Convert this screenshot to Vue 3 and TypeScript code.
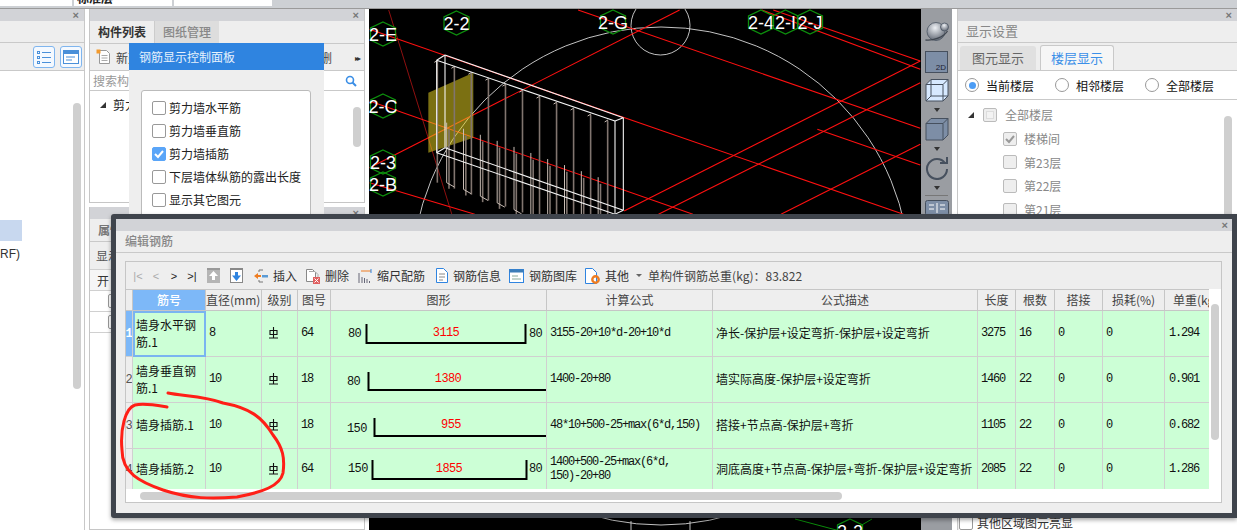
<script setup lang="ts">
const hex = [
  { t: '2-E', x: 383, y: 33 }, { t: '2-2', x: 456.5, y: 22 }, { t: '2-G', x: 613, y: 21 },
  { t: '2-4', x: 761, y: 21 }, { t: '2-I', x: 785.5, y: 21 }, { t: '2-J', x: 810, y: 21 },
  { t: '2-C', x: 383, y: 105 }, { t: '2-3', x: 383, y: 161 }, { t: '2-B', x: 383, y: 183 },
  { t: '2-2', x: 850, y: 530 }
]
const hexPts = (x: number, y: number) =>
  [[0, -12], [12.5, -6], [12.5, 6], [0, 12], [-12.5, 6], [-12.5, -6]]
    .map(p => `${x + p[0]},${y + p[1]}`).join(' ')
const SX = 2.613
const z = (a: number, b: number, c: number, d: number) => ({ x1: 360 + a / SX, y1: b / 3, x2: 360 + c / SX, y2: d / 3 })
const q = (a: number, b: number, c: number, d: number) => ({ x1: 420 + a / 3, y1: 50 + b / 3, x2: 420 + c / 3, y2: 50 + d / 3 })
const redLines = [
  z(25, 85, 1420, 640), z(25, 300, 870, 640), z(25, 545, 300, 640), z(570, 27, 1464, 382),
  z(1080, 27, 1464, 180), z(1050, 27, 1464, 205), z(1195, 385, 1464, 492), z(25, 500, 835, 27),
  z(690, 630, 1464, 180), z(780, 640, 1464, 245), z(1100, 640, 1464, 430)
]
const darkLine = z(75, 27, 240, 640)
const wire = [
  q(75, 12, 610, 200), q(50, 28, 585, 210), q(75, 12, 50, 28), q(610, 200, 585, 210),
  q(75, 290, 610, 478), q(50, 305, 585, 490), q(75, 290, 50, 305), q(610, 478, 585, 490),
  q(50, 28, 50, 305), q(75, 12, 75, 290), q(585, 210, 585, 490), q(610, 200, 610, 478)
]
const yellow = [[25, 125], [160, 65], [160, 260], [25, 305]]
  .map(p => `${420 + p[0] / 3},${50 + p[1] / 3}`).join(' ')

const idx = Array.from({ length: 11 }, (_, i) => i)
const barA = idx.map(i => {
  const x = 52 + 51.1 * i
  const top = 30 + (x - 52) * 0.35
  return { x, top, bot: top + 365 }
})
const barB = idx.slice(0, 10).map(i => {
  const x = 80 + 50.5 * i
  return { x, top: 215 + (x - 80) * 0.36, bot: 395 + (x - 80) * 0.4 }
})
const darkBars = [
  ...barA.map(b => q(b.x, b.top, b.x, b.bot)),
  ...barB.map(b => q(b.x + 7, b.top + 20, b.x + 7, b.bot + 18))
]
const paleBars = [
  ...barB.map(b => q(b.x, b.top, b.x, b.bot)),
  ...barB.map(b => q(b.x, b.bot, b.x + 23, b.bot + 13)),
  ...barA.map(b => q(b.x - 9, b.top + 4, b.x + 1, b.top - 2))
]

const floors = [
  { t: '楼梯间', on: true }, { t: '第23层', on: false }, { t: '第22层', on: false }, { t: '第21层', on: false }
]
const popupItems = [
  { t: '剪力墙水平筋', on: false }, { t: '剪力墙垂直筋', on: false }, { t: '剪力墙插筋', on: true },
  { t: '下层墙体纵筋的露出长度', on: false }, { t: '显示其它图元', on: false }
]
const heads = ['筋号', '直径(mm)', '级别', '图号', '图形', '计算公式', '公式描述', '长度', '根数', '搭接', '损耗(%)', '单重(kg)']

interface Row {
  name: string; dia: string; fig: string; formula: string; desc: string; len: string; count: string; w: string
  path: string; mid: string; mx: number; my: number; lv: string; lx: number; ly: number; rv: string
}
const rows: Row[] = [
  { name: '墙身水平钢筋.1', dia: '8', fig: '64', formula: '3155-20+10*d-20+10*d', desc: '净长-保护层+设定弯折-保护层+设定弯折', len: '3275', count: '16', w: '1.294',
    path: 'M35.500 13V32H194.500V13', mid: '3115', mx: 115, my: 25, lv: '80', lx: 17, ly: 26, rv: '80' },
  { name: '墙身垂直钢筋.1', dia: '10', fig: '18', formula: '1400-20+80', desc: '墙实际高度-保护层+设定弯折', len: '1460', count: '22', w: '0.901',
    path: 'M37.500 15V33H216', mid: '1380', mx: 117, my: 25, lv: '80', lx: 16, ly: 28, rv: '' },
  { name: '墙身插筋.1', dia: '10', fig: '18', formula: '48*10+500-25+max(6*d,150)', desc: '搭接+节点高-保护层+弯折', len: '1105', count: '22', w: '0.682',
    path: 'M43.500 15V33H216', mid: '955', mx: 120, my: 25, lv: '150', lx: 16, ly: 29, rv: '' },
  { name: '墙身插筋.2', dia: '10', fig: '64', formula: '1400+500-25+max(6*d,\n150)-20+80', desc: '洞底高度+节点高-保护层+弯折-保护层+设定弯折', len: '2085', count: '22', w: '1.286',
    path: 'M41.500 13V32H195.500V13', mid: '1855', mx: 118, my: 25, lv: '150', lx: 17, ly: 25, rv: '80' }
]
</script>

<template>
  <div class="desk">
    <div class="strip">
      <span class="seg s1"></span>
      <span class="seg s2"><em>标准层</em></span>
      <span class="seg s3"></span>
    </div>

    <div class="main">
      <!-- left panel -->
      <section class="left">
        <div class="pbar"><span class="x">×</span></div>
        <div class="blank"></div>
        <div class="ltools">
          <span class="lbtn">
            <svg width="18" height="18" viewBox="0 0 18 18"><g fill="none" stroke="#4a90d9"><rect x="2.500" y="3.500" width="2" height="2" /><rect x="2.500" y="8.500" width="2" height="2" /><rect x="2.500" y="13.500" width="2" height="2" /><path d="M7 4.500h9M7 9.500h9M7 14.500h9" /></g></svg>
          </span>
          <span class="lbtn">
            <svg width="18" height="18" viewBox="0 0 18 18"><rect x="1.500" y="2.500" width="15" height="13" fill="#fff" stroke="#4a90d9" /><rect x="1.500" y="2.500" width="15" height="3.500" fill="#4a90d9" /><path d="M4 9h9M4 12h6" stroke="#4a90d9" /></svg>
          </span>
        </div>
        <div class="lbody">
          <i class="lscroll"></i>
          <div class="lsel"></div>
          <div class="ltext">RF)</div>
        </div>
      </section>

      <!-- middle column -->
      <div class="mid">
        <section class="panel pa">
          <div class="pbar"><span class="x">×</span></div>
          <div class="tabs">
            <span class="tab on">构件列表</span>
            <span class="tab">图纸管理</span>
          </div>
          <div class="mtools">
            <svg class="doc" width="16" height="16" viewBox="0 0 16 16"><path d="M3.500 1.500h7l3 3v10h-10z" fill="#fff" stroke="#999" /><path d="M5.500 6.500h6M5.500 9h6M5.500 11.500h6" stroke="#aaa" /><rect x="0.500" y="0.500" width="4" height="4" fill="#f39a2d" /></svg>
            <span>新建</span>
            <span class="grow"></span>
            <span class="cutr">删</span>
            <span class="more">▸▸</span>
          </div>
          <div class="search">
            <span>搜索构件...</span>
            <svg width="12" height="12" viewBox="0 0 12 12"><circle cx="5" cy="5" r="3.500" fill="none" stroke="#3a8ee6" stroke-width="1.600" /><path d="M7.500 7.500L11 11" stroke="#3a8ee6" stroke-width="2" /></svg>
          </div>
          <div class="mtree">
            <i class="tri"></i><span>剪力墙</span>
            <i class="mscroll"></i>
          </div>
        </section>
        <section class="panel pb">
          <div class="pbar"><span class="x">×</span></div>
          <div class="tabs"><span class="tab on lone">属性</span></div>
          <div class="pbrow show">显示</div>
          <div class="pbrow open">开</div>
          <div class="pbrow cbrow"><i class="cb small"></i></div>
          <div class="pbrow cbrow"><i class="cb small"></i></div>
        </section>
      </div>

      <!-- CAD view -->
      <div class="cad">
        <svg width="552" height="522" viewBox="369 8 552 522">
          <g fill="none" stroke="#d8d8d8" stroke-width="0.900">
            <circle cx="661" cy="275" r="249" />
            <circle cx="660.500" cy="24.500" r="29.500" />
            <path d="M631 520V530M690 520V530" />
          </g>
          <line v-bind="darkLine" stroke="#8e1010" stroke-width="1" />
          <path d="M795 518L840 530M872 518L860 525" stroke="#0a8a0a" fill="none" />
          <line v-for="(l, i) in redLines" :key="'r' + i" v-bind="l" stroke="#ff1010" stroke-width="1.100" />
          <polygon :points="yellow" fill="#e0cc20" opacity="0.550" />
          <line v-for="(l, i) in darkBars" :key="'a' + i" v-bind="l" stroke="#81756f" stroke-width="1.600" />
          <line v-for="(l, i) in paleBars" :key="'b' + i" v-bind="l" stroke="#c8bcb4" stroke-width="1" />
          <line v-for="(l, i) in wire" :key="'w' + i" v-bind="l" stroke="#f4f4f4" stroke-width="1.100" />
          <g v-for="(h, i) in hex" :key="'x' + i">
            <polygon :points="hexPts(h.x, h.y)" fill="none" stroke="#0d8f0d" stroke-width="1.300" />
            <text :x="h.x" :y="h.y + 7" class="hext" text-anchor="middle">{{ h.t }}</text>
          </g>
        </svg>
      </div>

      <!-- view toolbar -->
      <div class="vbar">
        <svg width="24" height="24" viewBox="0 0 24 24">
          <defs>
            <radialGradient id="ball" cx="0.450" cy="0.300" r="0.750">
              <stop offset="0" stop-color="#eef1f5" />
              <stop offset="1" stop-color="#59606c" />
            </radialGradient>
          </defs>
          <circle cx="11" cy="12.500" r="9" fill="url(#ball)" stroke="#4b5563" stroke-width="0.800" />
          <circle cx="19.500" cy="8" r="4" fill="url(#ball)" stroke="#4b5563" stroke-width="0.800" />
          <path d="M0.500 21C8 22 19 18 22.500 12" fill="none" stroke="#3f4650" stroke-width="1.300" />
        </svg>
        <div class="v2d">2D</div>
        <svg width="24" height="24" viewBox="0 0 24 24"><path d="M1 6.500L6 1.500H23V18L18 23H1z" fill="#d7e9ff" stroke="#46505e" /><path d="M1 6.500H18V23M18 6.500L23 1.500M6 1.500V18H23M6 18L1 23" fill="none" stroke="#46505e" /></svg>
        <i class="caret"></i>
        <svg width="24" height="24" viewBox="0 0 24 24"><path d="M1 6.500L6 1.500H23V18L18 23H1z" fill="#7d8ea6" stroke="#46505e" /><path d="M1 6.500H18V23M18 6.500L23 1.500" fill="none" stroke="#46505e" /></svg>
        <i class="caret"></i>
        <svg width="24" height="24" viewBox="0 0 24 24"><path d="M20 7A10 10 0 1 0 22 13" fill="none" stroke="#46505e" stroke-width="2" /><path d="M15 7H22V1" fill="none" stroke="#46505e" stroke-width="2" /></svg>
        <i class="caret"></i>
        <b class="vsep"></b>
        <svg width="24" height="16" viewBox="0 0 24 16"><rect x="0.500" y="0.500" width="23" height="15" rx="2" fill="#7d8ea6" stroke="#46505e" /><path d="M4 5h5M4 9h5M15 5h5M15 9h5M12 3v10" stroke="#fff" /></svg>
      </div>

      <!-- right panel -->
      <section class="right">
        <div class="pbar"><span class="x">×</span></div>
        <div class="rtitle">显示设置</div>
        <div class="rtabs">
          <span class="rtab">图元显示</span>
          <span class="rtab on">楼层显示</span>
        </div>
        <div class="radios">
          <label><i class="radio on"></i>当前楼层</label>
          <label><i class="radio"></i>相邻楼层</label>
          <label><i class="radio"></i>全部楼层</label>
        </div>
        <div class="rtree">
          <i class="rscroll"></i>
          <div class="rnode root"><i class="tri"></i><i class="cb dis"><u></u></i><span>全部楼层</span></div>
          <div v-for="f in floors" :key="f.t" class="rnode">
            <i class="cb dis">
              <svg v-if="f.on" width="12" height="12" viewBox="0 0 12 12"><path d="M2 6l3 3 5-6" fill="none" stroke="#999" stroke-width="2" /></svg>
            </i>
            <span>{{ f.t }}</span>
          </div>
        </div>
        <div class="rfoot"><i class="cb small"></i><span>其他区域图元亮显</span></div>
      </section>
    </div>

    <!-- floating control panel -->
    <aside class="popup">
      <header>钢筋显示控制面板</header>
      <div class="pbox">
        <label v-for="p in popupItems" :key="p.t">
          <i class="cb" :class="{ checked: p.on }">
            <svg v-if="p.on" width="12" height="12" viewBox="0 0 12 12"><path d="M2 6l3 3 5-6" fill="none" stroke="#fff" stroke-width="2" /></svg>
          </i>{{ p.t }}
        </label>
      </div>
    </aside>

    <!-- rebar editor dialog -->
    <div class="dialog">
      <div class="pbar dbar"><span class="x">×</span></div>
      <div class="dtitle">编辑钢筋</div>
      <div class="dgroup">
        <div class="dtools">
          <span class="nav dim">|&lt;</span>
          <span class="nav dim">&lt;</span>
          <span class="nav">&gt;</span>
          <span class="nav">&gt;|</span>
          <svg class="t1" width="13" height="15" viewBox="0 0 13 15"><rect width="13" height="15" fill="#b5b5b5" /><rect y="0" width="13" height="2" fill="#999" /><path d="M6.500 3L11 8H8v4H5V8H2z" fill="#fff" /></svg>
          <svg class="t2" width="13" height="15" viewBox="0 0 13 15"><rect x="0.500" y="0.500" width="12" height="14" fill="#fff" stroke="#888" /><rect y="0" width="13" height="2" fill="#888" /><path d="M6.500 13L2 7.500h3V4h3v3.500h3z" fill="#2f84e0" /></svg>
          <span class="ti"><svg width="14" height="14" viewBox="0 0 14 14"><path d="M5 1H9M5 1V3M5 11V13H9M5 11" fill="none" stroke="#777" /><path d="M0 7L4 4V6H7V8H4V10z" fill="#ee7d22" /><rect x="8" y="6" width="6" height="2.500" fill="#5b9bd5" /></svg>插入</span>
          <span class="ti"><svg width="14" height="16" viewBox="0 0 14 16"><path d="M.5 1.500h6l3 3v9h-9z" fill="#fff" stroke="#888" /><path d="M3 3.500h6l3 3v8" fill="none" stroke="#aaa" /><rect x="7" y="9" width="7" height="7" fill="#e06060" /><path d="M8.500 10.500l4 4m0-4l-4 4" stroke="#fff" /></svg>删除</span>
          <span class="ti wide"><svg width="14" height="14" viewBox="0 0 14 14"><path d="M1 4v10M4 8v6M6.500 9v5M9 10v4M11.500 12v2" stroke="#667" /><path d="M3 2H13" stroke="#ee7d22" /><path d="M13 0v4" stroke="#2f84e0" /></svg>缩尺配筋</span>
          <span class="ti tight"><svg width="12" height="15" viewBox="0 0 12 15"><path d="M.5.500h7l4 4v10H.5z" fill="#fff" stroke="#2f84e0" /><path d="M3 6h6M3 9h6M3 12h4" stroke="#888" /></svg>钢筋信息</span>
          <span class="ti tight"><svg width="15" height="14" viewBox="0 0 15 14"><rect x=".5" y=".5" width="14" height="13" fill="#fff" stroke="#2f84e0" /><rect x=".5" y=".5" width="14" height="3" fill="#3d7db8" /><path d="M3 7h6M3 10h9" stroke="#8a9" /></svg>钢筋图库</span>
          <span class="ti"><svg width="15" height="16" viewBox="0 0 15 16"><path d="M.5.500h7l4 4v11H.5z" fill="#fff" stroke="#2f84e0" /><circle cx="10.500" cy="11.500" r="3.200" fill="none" stroke="#ee7d22" stroke-width="2.400" /></svg>其他</span>
          <i class="tcaret"></i>
          <span class="total">单构件钢筋总重(kg)：83.822</span>
        </div>
        <div class="tablewrap">
          <div class="gridbox">
            <div class="ghead">
              <span class="gh corner"></span>
              <span v-for="(h, i) in heads" :key="h" class="gh" :class="{ act: i === 0 }">{{ h }}</span>
            </div>
            <div v-for="(r, i) in rows" :key="i" class="grow-row">
              <span class="gc rn" :class="{ act: i === 0 }">{{ i + 1 }}</span>
              <span class="gc cjk" :class="{ sel: i === 0 }">{{ r.name }}</span>
              <span class="gc mono">{{ r.dia }}</span>
              <span class="gc">
                <svg class="grade" width="11" height="13" viewBox="0 0 11 13"><path d="M2 4.500H9V8.500H2zM5.500 1V12M1 12H10" fill="none" stroke="#111" stroke-width="1.100" /></svg>
              </span>
              <span class="gc mono">{{ r.fig }}</span>
              <span class="gc shape">
                <svg width="216" height="46" viewBox="0 0 216 46">
                  <path :d="r.path" fill="none" stroke="#000" stroke-width="2" />
                  <text :x="r.lx" :y="r.ly" class="dim-t">{{ r.lv }}</text>
                  <text v-if="r.rv" x="198" :y="i === 0 ? 26 : 25" class="dim-t">{{ r.rv }}</text>
                  <text :x="r.mx" :y="r.my" class="mid-t" text-anchor="middle">{{ r.mid }}</text>
                </svg>
              </span>
              <span class="gc mono pre">{{ r.formula }}</span>
              <span class="gc cjk">{{ r.desc }}</span>
              <span class="gc mono">{{ r.len }}</span>
              <span class="gc mono">{{ r.count }}</span>
              <span class="gc mono">0</span>
              <span class="gc mono">0</span>
              <span class="gc mono">{{ r.w }}</span>
            </div>
          </div>
          <i class="dv"></i>
          <i class="dh"></i>
        </div>
      </div>
    </div>

    <!-- hand drawn annotation -->
    <svg class="note" width="1237" height="530" viewBox="0 0 1237 530">
      <path d="M168 393C182 396 205 396 223 403C250 408 262 417 273 435C283 448 285 458 283 473C280 486 263 492 237 497C212 499 190 499 163 490C140 482 122 473 122 450C120 430 125 408 135 405C145 403 155 405 167 407" fill="none" stroke="#ff1f17" stroke-width="3" stroke-linecap="round" />
    </svg>
  </div>
</template>

<style>
html, body { margin: 0; background: #fff; }
</style>

<style scoped>
.desk {
  position: relative;
  width: 1237px;
  height: 530px;
  overflow: hidden;
  display: flex;
  flex-direction: column;
  font-family: "Noto Sans CJK SC", "Liberation Sans", sans-serif;
  font-size: 12px;
  color: #222;
  background: #fff;
}
i, em, u { font-style: normal; text-decoration: none; }
.strip {
  flex: none;
  display: flex;
  gap: 2px;
  background: #cdd0d4;
  border-bottom: 1px solid #9a9a9a;
  box-sizing: border-box;
  height: 9px;
}
.seg { height: 6px; background: #fff; overflow: hidden; display: block; }
.s1 { width: 72px; }
.s2 { width: 98px; }
.s3 { width: 98px; }
.seg em { display: block; font-weight: 700; line-height: 12px; margin-top: -8px; margin-left: 3px; }
.main { flex: 1; display: flex; min-height: 0; }

.pbar {
  height: 12px;
  background: #d2d3d7;
  display: flex;
  justify-content: flex-end;
  align-items: center;
  padding-right: 5px;
  flex: none;
}
.x { font: 700 11px/12px "Liberation Sans", sans-serif; color: #777; }

.left { width: 85px; flex: none; display: flex; flex-direction: column; background: #eee; border-right: 1px solid #c8c8c8; box-sizing: border-box; }
.blank { height: 21px; border-bottom: 1px solid #c9c9c9; flex: none; }
.ltools { height: 28px; flex: none; display: flex; align-items: center; justify-content: flex-end; gap: 5px; padding-right: 2px; border-bottom: 1px solid #c9c9c9; box-sizing: border-box; }
.lbtn { width: 22px; height: 22px; border: 1px solid #7fb5ee; border-radius: 3px; box-sizing: border-box; background: #f4f9ff; display: flex; align-items: center; justify-content: center; }
.lbody { flex: 1; background: #fff; position: relative; padding-top: 149px; }
.lscroll { position: absolute; left: 73px; top: 32px; width: 8px; height: 286px; background: #cfcfcf; border-radius: 4px; }
.lsel { width: 22px; height: 21px; background: #c8d8ef; }
.ltext { margin-top: 4px; color: #333; line-height: 18px; font-family: "Liberation Sans", sans-serif; }

.mid { width: 276px; margin: 0 4px; flex: none; display: flex; flex-direction: column; gap: 4px; }
.panel { background: #fff; border: 1px solid #c6c6c6; border-top: 0; display: flex; flex-direction: column; box-sizing: border-box; }
.pa { height: 194px; }
.pb { flex: 1; }
.tabs { height: 23px; flex: none; display: flex; background: #eee; border-bottom: 1px solid #c9c9c9; box-sizing: border-box; }
.tab { width: 64px; text-align: center; line-height: 22px; background: #ddd; color: #888; font-weight: 500; border-left: 1px solid #ccc; }
.tab.on { background: #eee; color: #333; font-weight: 700; border-left: 0; }
.tab.lone { text-align: left; padding-left: 8px; color: #777; }
.mtools { height: 27px; flex: none; display: flex; align-items: center; background: #eee; padding: 0 5px; gap: 4px; border-bottom: 1px solid #c9c9c9; color: #444; box-sizing: border-box; }
.doc { margin-left: 1px; }
.grow { flex: 1; }
.cutr { margin-right: 19px; }
.more { font-size: 8px; letter-spacing: -2px; color: #333; }
.search { height: 20px; flex: none; display: flex; align-items: center; justify-content: space-between; padding: 0 7px 0 3px; color: #999; border-bottom: 1px solid #c9c9c9; box-sizing: border-box; }
.mtree { flex: 1; position: relative; padding: 5px 0 0 10px; display: flex; align-items: flex-start; gap: 7px; }
.tri { width: 0; height: 0; border-style: solid; border-width: 0 0 6px 6px; border-color: transparent transparent #333 transparent; margin-top: 6px; flex: none; }
.mscroll { position: absolute; right: 3px; top: 16px; width: 8px; height: 40px; background: #cfcfcf; border-radius: 4px; }
.pbrow { display: flex; align-items: center; color: #555; box-sizing: border-box; border-bottom: 1px solid #d0d0d0; flex: none; }
.show { height: 28px; padding-left: 6px; background: #eee; }
.open { height: 21px; padding-left: 7px; background: #f6f6f6; color: #333; }
.cbrow { height: 21px; padding-left: 18px; background: #fff; }

.cad { width: 552px; flex: none; background: #000; overflow: hidden; line-height: 0; }
.hext { fill: #fff; font: 18px "Liberation Sans", sans-serif; }

.vbar { width: 31px; flex: none; background: #9a9da2; display: flex; flex-direction: column; align-items: center; padding-top: 10px; box-sizing: border-box; gap: 0; }
.vbar svg { flex: none; }
.v2d { width: 23px; height: 22px; margin-top: 8px; margin-bottom: 5px; background: #7d8ea6; border: 1px solid #46505e; box-sizing: border-box; font: 8px/9px "Liberation Sans", sans-serif; color: #223; text-align: right; padding: 11px 1px 0 0; }
.caret { width: 0; height: 0; border-style: solid; border-width: 4px 3px 0; border-color: #333 transparent transparent; margin: 6px 0 5px; }
.vsep { width: 23px; height: 1px; background: #777; margin: 0 0 4px; }

.right { width: 280px; margin-left: 5px; flex: none; display: flex; flex-direction: column; background: #eee; border-left: 1px solid #c8c8c8; box-sizing: border-box; position: relative; }
.rtitle { height: 21px; line-height: 20px; padding-left: 8px; color: #888; font-size: 13px; border-bottom: 1px solid #c9c9c9; box-sizing: content-box; flex: none; }
.rtabs { height: 28px; flex: none; display: flex; align-items: flex-end; gap: 4px; padding-left: 2px; border-bottom: 1px solid #c9c9c9; box-sizing: border-box; }
.rtab { width: 76px; height: 24px; line-height: 24px; text-align: center; background: #e0e0e0; color: #666; border-radius: 3px 3px 0 0; font-size: 13px; }
.rtab.on { height: 25px; width: 74px; background: #f6f6f6; color: #3b8fe8; border: 1px solid #c9c9c9; border-bottom: 0; box-sizing: border-box; }
.radios { height: 29px; flex: none; display: flex; align-items: center; padding-left: 7px; gap: 21px; background: #fff; border-bottom: 1px solid #c9c9c9; box-sizing: border-box; color: #111; font-size: 12px; }
.radios label { display: flex; align-items: center; gap: 7px; }
.radio { width: 14px; height: 14px; border: 1px solid #999; border-radius: 50%; box-sizing: border-box; position: relative; display: block; }
.radio.on::after { content: ""; position: absolute; left: 2.500px; top: 2.500px; width: 7px; height: 7px; border-radius: 50%; background: #4b9cf5; }
.rtree { height: 417px; background: #fff; flex: none; position: relative; padding-left: 45px; padding-top: 3px; box-sizing: border-box; }
.rscroll { position: absolute; left: 266px; top: 16px; width: 8px; height: 300px; background: #cfcfcf; border-radius: 4px; }
.rnode { display: flex; align-items: center; gap: 7px; height: 23.700px; color: #888; font-size: 12px; }
.rnode.root { margin-left: -35px; gap: 9px; }
.rnode.root .tri { margin-top: 0; }
.rnode.root span { margin-left: -1px; }

.cb { width: 14px; height: 14px; border: 1px solid #999; border-radius: 2px; box-sizing: border-box; background: #fff; display: inline-flex; align-items: center; justify-content: center; flex: none; }
.cb.dis { background: #eee; border-color: #bbb; }
.cb.dis u { width: 8px; height: 8px; border: 1px solid #ddd; background: #f3f3f3; display: block; box-sizing: border-box; }
.cb.checked { background: #5aa5f8; border-color: #5aa5f8; }
.cb.small { width: 14px; height: 14px; }
.rfoot { position: absolute; left: 1px; top: 505px; display: flex; align-items: center; gap: 4px; background: #fff; width: 100%; font-size: 12px; color: #333; }

.popup { position: absolute; left: 129px; top: 43px; width: 195px; height: 171px; background: #eee; overflow: hidden; }
.popup header { height: 27px; line-height: 27px; background: #2f84e0; color: #e6f1fc; padding-left: 10px; }
.pbox { margin: 20px 13px 0 12px; height: 130px; background: #fff; border: 1px solid #bbb; border-radius: 3px; box-sizing: border-box; padding-top: 5px; padding-left: 10px; display: flex; flex-direction: column; }
.pbox label { height: 23px; flex: none; display: flex; align-items: center; gap: 3px; color: #222; white-space: nowrap; }

.dialog {
  position: absolute;
  left: 111px;
  top: 214px;
  width: 1126px;
  height: 304px;
  box-sizing: border-box;
  border: 5px solid #3f444c;
  border-radius: 3px 0 0 3px;
  background: #eee;
  box-shadow: 0 2px 4px rgba(0,0,0,.35);
}
.dbar { padding-right: 4px; }
.dtitle { height: 21px; line-height: 20px; padding-left: 9px; color: #888; font-size: 12px; font-weight: 500; border-bottom: 1px solid #c9c9c9; }
.dgroup { margin: 8px 10px 0 9px; height: 242px; border: 1px solid #c6c6c6; box-sizing: border-box; display: flex; flex-direction: column; }
.dtools { height: 27px; flex: none; display: flex; align-items: center; padding-left: 3px; color: #333; white-space: nowrap; }
.nav { width: 18px; font: 11px "Liberation Sans", sans-serif; color: #222; text-align: center; }
.nav.dim { color: #aaa; }
.t1 { margin-left: 6px; }
.t2 { margin-left: 10px; margin-right: 11px; }
.ti { display: flex; align-items: center; gap: 5px; margin-right: 9px; }
.ti.wide { margin-right: 11px; }
.ti.tight { margin-right: 8px; }
.tcaret { width: 0; height: 0; border-style: solid; border-width: 3px 3px 0; border-color: #666 transparent transparent; margin: 0 6px 0 -2px; }
.total { color: #444; }
.tablewrap { position: relative; flex: 1; background: #fff; min-height: 0; overflow: hidden; }
.gridbox { width: 1083px; height: 200px; overflow: hidden; }
.ghead, .grow-row {
  display: grid;
  grid-template-columns: 7px 73px 56px 36px 33px 216px 166px 265px 38px 39px 48px 62px 44px;
}
.ghead { height: 22px; background: #eee; border-top: 1px solid #c6c6c6; box-sizing: border-box; }
.gh { border-right: 1px solid #c6c6c6; border-bottom: 1px solid #c6c6c6; text-align: center; line-height: 20px; color: #444; overflow: hidden; white-space: nowrap; box-sizing: border-box; }
.gh:last-child { border-right: 0; text-align: left; padding-left: 8px; }
.gh:nth-child(3) { text-align: left; }
.gh.act { background: #7db8f8; color: #fff; font-weight: 500; }
.grow-row { height: 46px; background: #ccffd6; }
.grow-row:last-child { height: 42px; }
.gc { border-right: 1px solid #d0d0d0; border-bottom: 1px solid #d0d0d0; display: flex; align-items: center; padding: 0 0 2px 3px; box-sizing: border-box; overflow: hidden; color: #111; }
.gc:last-child { border-right: 0; padding-left: 4px; }
.mono { font: 12px/14px "Liberation Mono", monospace; letter-spacing: -1.200px; overflow-wrap: anywhere; }
.pre { white-space: pre-line; }
.cjk { line-height: 17px; }
.rn { padding: 0; justify-content: center; color: #555; font: 12px "Liberation Mono", monospace; background: #eee; }
.rn.act { background: #7db8f8; color: #fff; font-weight: 700; }
.sel { outline: 2px solid #7ab4f0; outline-offset: -2px; }
.grade { margin-left: 3px; }
.shape { padding: 0; }
.shape svg { display: block; flex: none; }
.dim-t { font: 12px "Liberation Mono", monospace; fill: #111; letter-spacing: -0.600px; }
.mid-t { font: 12px "Liberation Mono", monospace; fill: #f00; letter-spacing: -0.600px; }
.dv { position: absolute; left: 1085px; top: 15px; width: 8px; height: 136px; background: #cfcfcf; border-radius: 4px; }
.dh { position: absolute; left: 14px; top: 203px; width: 702px; height: 8px; background: #cfcfcf; border-radius: 4px; }

.note { position: absolute; left: 0; top: 0; pointer-events: none; }
</style>
